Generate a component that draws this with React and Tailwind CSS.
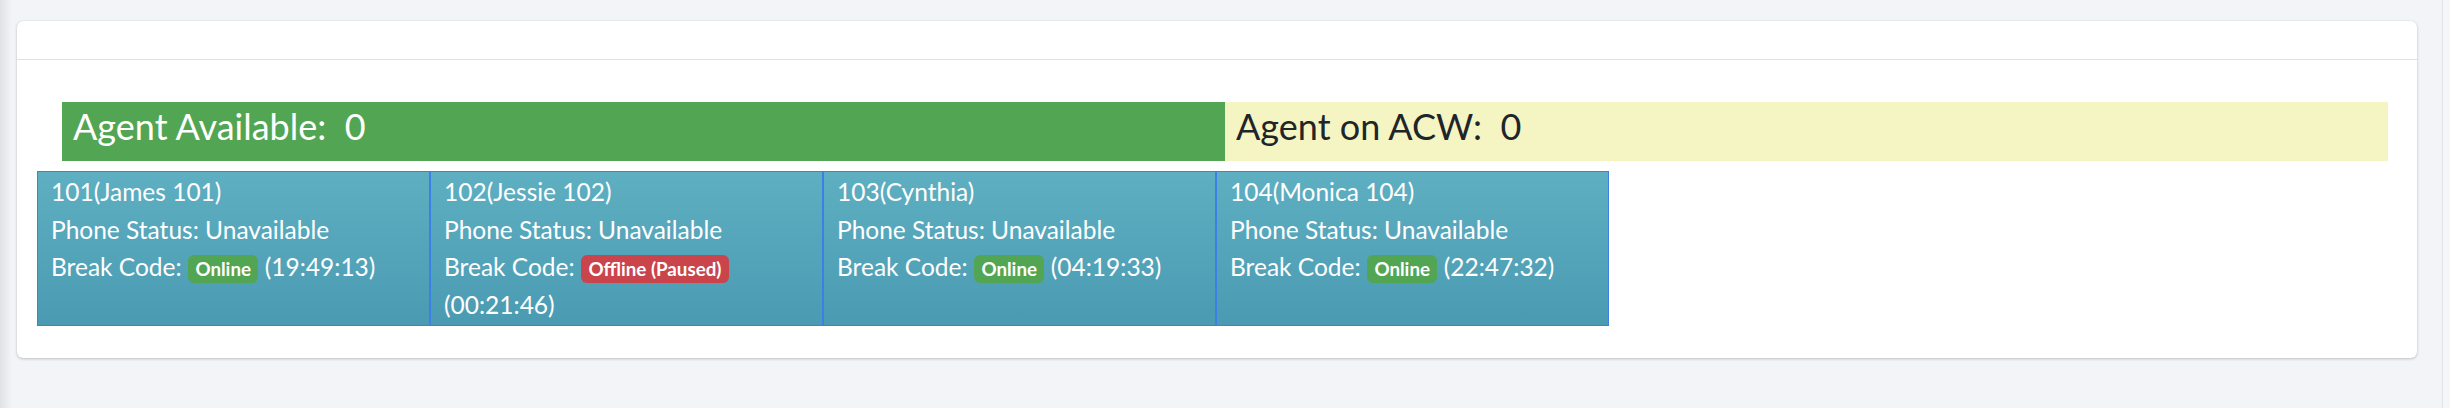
import React from "react";

const agents = [
  { id: "101(James 101)", badge: "Online", danger: false, time: "(19:49:13)" },
  { id: "102(Jessie 102)", badge: "Offline (Paused)", danger: true, time: "(00:21:46)" },
  { id: "103(Cynthia)", badge: "Online", danger: false, time: "(04:19:33)" },
  { id: "104(Monica 104)", badge: "Online", danger: false, time: "(22:47:32)" },
];

function AgentCard({ a }) {
  return (
    <div className="w-[393px] shrink-0 border border-[#3d7fe6] bg-gradient-to-b from-[#5fafc2] to-[#4a9bb2] pl-[13px] pr-[12px] pt-[1px] pb-[2px] text-[24.5px] leading-[37.5px] text-white">
      <div>{a.id}</div>
      <div>Phone Status: Unavailable</div>
      <div>
        Break Code:{" "}
        <span
          className={
            "inline-block rounded-[6px] px-[7.5px] py-[4.7px] align-baseline text-[18.75px] font-bold leading-none text-white " +
            (a.danger ? "bg-[#c9444b]" : "bg-[#52a552]")
          }
        >
          {a.badge}
        </span>{" "}
        {a.time}
      </div>
    </div>
  );
}

export default function App() {
  return (
    <div
      className="flex h-[408px] w-full bg-[#f3f4f8]"
      style={{ fontFamily: "Lato, 'Open Sans', 'Liberation Sans', sans-serif" }}
    >
      <div className="w-[12px] shrink-0 bg-gradient-to-r from-[#e1e2e6] to-[#f3f4f8]" />
      <div className="flex-1 pl-[5px] pr-[25px] pt-[21px]">
        <div className="rounded-[6px] bg-white shadow-[0_0_1px_rgba(0,0,0,0.15),0_1px_3px_rgba(0,0,0,0.2)]">
          <div className="h-[39px] border-b border-[#dee2e6]" />
          <div className="pb-[32px] pl-[20px] pr-[29px] pt-[42px]">
            <div className="ml-[25px] flex h-[59px]">
              <div className="flex w-1/2 items-center bg-[#52a552] pb-[12px] pl-[11px] text-[36px] text-white">
                Agent Available:{"\u00a0 "}0
              </div>
              <div className="flex w-1/2 items-center bg-[#f5f5c3] pb-[12px] pl-[11px] text-[36px] text-[#212529]">
                Agent on ACW:{"\u00a0 "}0
              </div>
            </div>
            <div className="mt-[10px] flex">
              {agents.map((a) => (
                <AgentCard key={a.id} a={a} />
              ))}
            </div>
          </div>
        </div>
      </div>
      <div className="w-[8px] shrink-0 border-l border-[#e3e4e8] bg-[#f5f6f9]" />
    </div>
  );
}
